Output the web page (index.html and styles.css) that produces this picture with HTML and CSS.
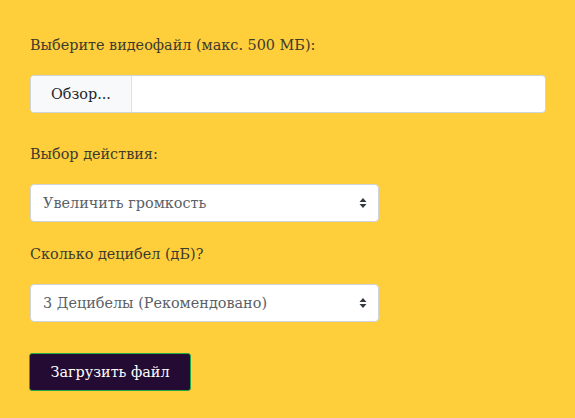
FILE: index.html
```html
<!DOCTYPE html>
<html lang="ru">
<head>
<meta charset="utf-8">
<link rel="stylesheet" href="styles.css">
</head>
<body>
<form class="form">
  <div class="group">
    <label class="label">Выберите видеофайл (макс. 500 МБ):</label>
    <div class="file">
      <span class="file-btn">Обзор...</span>
      <span class="file-name"></span>
    </div>
  </div>
  <div class="group">
    <label class="label">Выбор действия:</label>
    <div class="select">
      <span>Увеличить громкость</span>
      <svg class="arrows" width="8" height="12" viewBox="0 0 8 12"><path d="M4 1 L7.5 5 H0.5 Z M4 11 L7.5 7 H0.5 Z" fill="#343a40"/></svg>
    </div>
  </div>
  <div class="group">
    <label class="label">Сколько децибел (дБ)?</label>
    <div class="select last">
      <span>3 Децибелы (Рекомендовано)</span>
      <svg class="arrows" width="8" height="12" viewBox="0 0 8 12"><path d="M4 1 L7.5 5 H0.5 Z M4 11 L7.5 7 H0.5 Z" fill="#343a40"/></svg>
    </div>
  </div>
  <button class="submit" type="button">Загрузить файл</button>
</form>
</body>
</html>
```

FILE: styles.css
```css
* {
  box-sizing: border-box;
}
html, body {
  margin: 0;
  background: #ffce3b;
}
body {
  font-family: "DejaVu Serif", "Liberation Serif", serif;
  color: #3d3a2e;
  font-size: 14.4px;
}
.form {
  width: 546px;
  padding: 34px 0 0 30px;
  display: flex;
  flex-direction: column;
}
.group {
  display: flex;
  flex-direction: column;
}
.label {
  display: block;
  height: 22px;
  line-height: 22px;
  margin-bottom: 19px;
}
.file {
  display: flex;
  height: 38px;
  border: 1px solid #ced4da;
  border-radius: 4px;
  background: #fff;
  overflow: hidden;
  margin-bottom: 30px;
}
.file-btn {
  width: 101px;
  background: #f8f9fa;
  border-right: 1px solid #dee2e6;
  display: flex;
  align-items: center;
  justify-content: center;
  color: #212529;
}
.select {
  width: 349px;
  height: 38px;
  border: 1px solid #ced4da;
  border-radius: 4px;
  background: #fff;
  display: flex;
  align-items: center;
  justify-content: space-between;
  padding: 0 11px 0 12px;
  color: #5a5f66;
  margin-bottom: 21px;
}
.select.last {
  margin-bottom: 31px;
}
.submit {
  align-self: flex-start;
  margin-left: -1px;
  width: 162px;
  height: 38px;
  background: #230b33;
  color: #fff;
  border: 1px solid #28a745;
  border-radius: 3px;
  font-family: inherit;
  font-size: 14.4px;
}
```
